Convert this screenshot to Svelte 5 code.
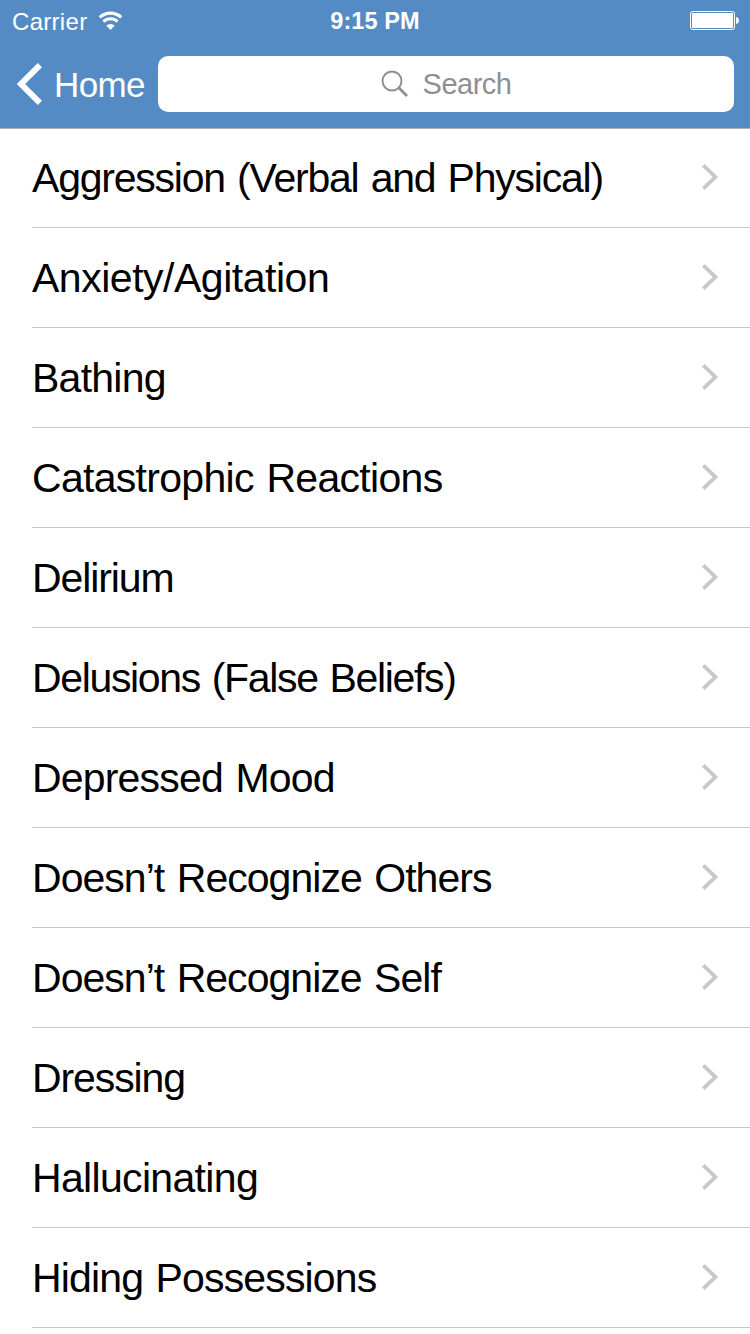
<script>
  const topics = [
    { name: 'Aggression (Verbal and Physical)', tracking: -1.22 },
    { name: 'Anxiety/Agitation', tracking: -0.48 },
    { name: 'Bathing', tracking: -0.75 },
    { name: 'Catastrophic Reactions', tracking: -0.7 },
    { name: 'Delirium', tracking: -1.1 },
    { name: 'Delusions (False Beliefs)', tracking: -1.36 },
    { name: 'Depressed Mood', tracking: -0.82 },
    { name: 'Doesn’t Recognize Others', tracking: -0.96 },
    { name: 'Doesn’t Recognize Self', tracking: -0.97 },
    { name: 'Dressing', tracking: -1.1 },
    { name: 'Hallucinating', tracking: -0.67 },
    { name: 'Hiding Possessions', tracking: -0.86 }
  ];
</script>

<div class="screen">
  <header>
    <div class="status">
      <div class="carrier">
        <span>Carrier</span>
        <svg width="26" height="20" viewBox="0 0 26 20" fill="none" stroke="#fff">
          <path d="M1.7 6.3 A16 16 0 0 1 23.3 6.3" stroke-width="3.1" />
          <path d="M5.4 10.6 A10.5 10.5 0 0 1 19.6 10.6" stroke-width="3" />
          <path d="M12.5 18.9 L8.3 14.6 A6 6 0 0 1 16.7 14.6 Z" fill="#fff" stroke="none" />
        </svg>
      </div>
      <time>9:15 PM</time>
      <svg class="battery" width="50" height="20" viewBox="0 0 50 20">
        <rect x="0.5" y="0.5" width="44" height="18" rx="2.5" fill="none" stroke="#fff" />
        <rect x="2" y="2" width="41" height="15" rx="1" fill="#fff" />
        <path d="M46 6 C50 6.5 50 12.5 46 13 Z" fill="#fff" />
      </svg>
    </div>
    <div class="nav">
      <button class="back">
        <svg width="26" height="42" viewBox="0 0 26 42" fill="none" stroke="#fff" stroke-width="6">
          <path d="M23.9 2.1 L5 21 L23.9 39.9" />
        </svg>
        <span>Home</span>
      </button>
      <div class="search">
        <svg width="28" height="28" viewBox="0 0 28 28" fill="none" stroke="#8e8e93">
          <circle cx="11" cy="11" r="9.5" stroke-width="1.9" />
          <path d="M17.8 17.8 L26 26" stroke-width="2.8" />
        </svg>
        <span>Search</span>
      </div>
    </div>
  </header>
  <ul>
    {#each topics as topic}
      <li>
        <span style="letter-spacing: {topic.tracking}px">{topic.name}</span>
        <svg width="18" height="28" viewBox="0 0 18 28" fill="none" stroke="#c7c7cc" stroke-width="3.8">
          <path d="M2.3 2.3 L14.4 14 L2.3 25.7" />
        </svg>
      </li>
    {/each}
  </ul>
</div>

<style>
  :global(body) { margin: 0; background: #fff; }
  .screen {
    width: 750px;
    height: 1334px;
    overflow: hidden;
    background: #fff;
    font-family: "Liberation Sans", Arial, sans-serif;
  }
  svg { display: block; flex: none; }
  header {
    height: 128px;
    background: #558bc5;
    color: #fff;
    box-shadow: 0 1px 0 #adadb0;
    position: relative;
  }
  .status {
    height: 40px;
    display: grid;
    grid-template-columns: 1fr auto 1fr;
    align-items: center;
    padding: 1px 10px 0 12px;
    box-sizing: border-box;
    font-size: 24px;
    line-height: 39px;
  }
  .carrier { display: flex; gap: 11px; align-items: center; }
  .carrier span { letter-spacing: 0.3px; }
  time { font-weight: 700; font-size: 23.5px; letter-spacing: 0.1px; padding-top: 1px; margin-left: -2px; }
  .battery { justify-self: end; }
  .nav {
    display: flex;
    align-items: center;
    height: 56px;
    padding: 16px 16px 0 16px;
  }
  .back {
    display: flex;
    align-items: center;
    width: 142px;
    height: 56px;
    padding: 0;
    border: 0;
    background: none;
    color: inherit;
    font: 35px/56px "Liberation Sans", Arial, sans-serif;
    letter-spacing: -0.6px;
    gap: 12px;
  }
  .back span { padding-top: 1px; }
  .search {
    flex: 1;
    height: 56px;
    border-radius: 10px;
    background: #fff;
    color: #8e8e93;
    display: flex;
    align-items: center;
    justify-content: center;
    gap: 14px;
    font-size: 29px;
    letter-spacing: -0.5px;
  }
  ul { list-style: none; margin: 0; padding: 0 0 0 32px; }
  li {
    height: 99px;
    border-bottom: 1px solid #c8c7cc;
    display: flex;
    align-items: center;
    justify-content: space-between;
    padding-right: 31px;
    font-size: 41px;
    word-spacing: 2px;
    white-space: nowrap;
  }
  li span { padding-top: 2px; }
  li svg { margin-bottom: 2px; }
</style>
